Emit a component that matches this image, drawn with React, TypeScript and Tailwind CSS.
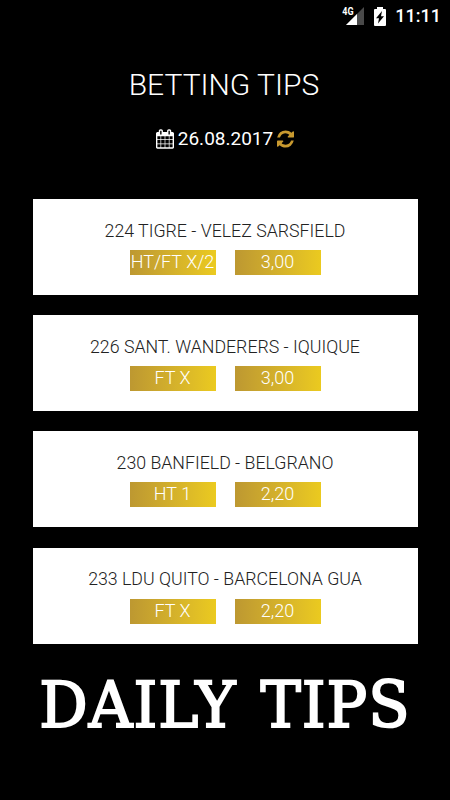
const tips = [
  { match: "224 TIGRE - VELEZ SARSFIELD", pick: "HT/FT X/2", odds: "3,00" },
  { match: "226 SANT. WANDERERS - IQUIQUE", pick: "FT X", odds: "3,00" },
  { match: "230 BANFIELD - BELGRANO", pick: "HT 1", odds: "2,20" },
  { match: "233 LDU QUITO - BARCELONA GUA", pick: "FT X", odds: "2,20" },
];

function CalendarIcon() {
  return (
    <svg viewBox="64 0 1664 1792" className="h-[20px] w-[18px]" fill="currentColor">
      <path d="M192 1664h288v-288h-288v288zm352 0h320v-288h-320v288zm-352-352h288v-320h-288v320zm352 0h320v-320h-320v320zm-352-384h288v-288h-288v288zm736 736h320v-288h-320v288zm-384-736h320v-288h-320v288zm768 736h288v-288h-288v288zm-384-352h320v-320h-320v320zm-352-864v-288q0-13-9.500-22.500t-22.500-9.500h-64q-13 0-22.500 9.500t-9.500 22.500v288q0 13 9.500 22.500t22.500 9.500h64q13 0 22.500-9.500t9.500-22.500zm736 864h288v-320h-288v320zm-384-384h320v-288h-320v288zm384 0h288v-288h-288v288zm32-480v-288q0-13-9.500-22.500t-22.500-9.500h-64q-13 0-22.500 9.500t-9.500 22.500v288q0 13 9.500 22.500t22.500 9.500h64q13 0 22.500-9.500t9.500-22.500zm384-64v1280q0 52-38 90t-90 38h-1408q-52 0-90-38t-38-90v-1280q0-52 38-90t90-38h128v-96q0-66 47-113t113-47h64q66 0 113 47t47 113v96h384v-96q0-66 47-113t113-47h64q66 0 113 47t47 113v96h128q52 0 90 38t38 90z" />
    </svg>
  );
}

function RefreshIcon() {
  return (
    <svg viewBox="128 0 1536 1792" className="h-[20px] w-[17px] text-[#c8992f]" fill="currentColor">
      <path d="M1639 1056q0 5-1 7-64 268-268 434.500t-478 166.500q-146 0-282.500-55t-243.500-157l-129 129q-19 19-45 19t-45-19-19-45v-448q0-26 19-45t45-19h448q26 0 45 19t19 45-19 45l-137 137q71 66 161 102t187 36q134 0 250-65t186-179q11-17 53-117 8-23 30-23h192q13 0 22.500 9.500t9.500 22.500zm25-800v448q0 26-19 45t-45 19h-448q-26 0-45-19t-19-45 19-45l138-138q-148-137-349-137-134 0-250 65t-186 179q-11 17-53 117-8 23-30 23h-199q-13 0-22.500-9.500t-9.500-22.500v-7q65-268 270-434.500t480-166.500q146 0 284 55.500t245 156.500l130-129q19-19 45-19t45 19 19 45z" />
    </svg>
  );
}

function StatusBar() {
  return (
    <div className="flex h-8 items-center justify-end pr-[9px]">
      <span className="mb-2 -mr-[7px] origin-right scale-x-90 text-[10px] leading-none font-bold">4G</span>
      <svg viewBox="0 0 18 18" className="h-[18px] w-[18px]">
        <path d="M18 0V18H0Z" fill="#4a4a4a" />
        <path d="M11 7V18H0Z" fill="#fff" />
      </svg>
      <svg viewBox="0 0 12 19" className="ml-2.5 h-[19px] w-3">
        <path d="M3 0h6v2h2a1 1 0 0 1 1 1v15a1 1 0 0 1-1 1H1a1 1 0 0 1-1-1V3a1 1 0 0 1 1-1h2Z" fill="#fff" />
        <path d="M8 4 2 11.200H5L4 16.500 10 9.300H7Z" fill="#000" />
      </svg>
      <span className="ml-[9px] text-[18px] leading-none font-medium">11:11</span>
    </div>
  );
}

function TipBadge({ label }: { label: string }) {
  return (
    <div className="h-[25px] w-[86px] bg-linear-to-r from-[#bd9831] to-[#ebca1f] text-center text-[18px] leading-[24px] font-light whitespace-nowrap text-white">
      {label}
    </div>
  );
}

function App() {
  return (
    <div className="h-[800px] w-[450px] overflow-hidden bg-black font-['Roboto',sans-serif] text-white">
      <StatusBar />

      <header className="flex flex-col items-center pt-[35px]">
        <h1 className="pr-0.5 text-[30px] leading-[36px] font-light">BETTING TIPS</h1>
        <div className="mt-[24px] flex h-6 items-center gap-1">
          <CalendarIcon />
          <span className="text-[19px] leading-6">26.08.2017</span>
          <RefreshIcon />
        </div>
      </header>

      <main className="mt-[48px] flex flex-col items-center gap-[20.2px]">
        {tips.map((tip) => (
          <section key={tip.match} className="flex h-24 w-[385px] flex-col items-center bg-white pt-[20.8px]">
            <h2 className="text-[17.750px] leading-[22px] font-light whitespace-nowrap text-[#222]">
              {tip.match}
            </h2>
            <div className="mt-[8.2px] flex gap-[19px]">
              <TipBadge label={tip.pick} />
              <TipBadge label={tip.odds} />
            </div>
          </section>
        ))}
      </main>

      <footer className="mt-[26.4px] text-center">
        <p className="origin-center scale-x-[0.96] font-['DejaVu_Serif',serif] text-[63px] leading-[72px] tracking-[1px] [word-spacing:4px] whitespace-nowrap [-webkit-text-stroke:2px_white]">
          DAILY TIPS
        </p>
      </footer>
    </div>
  );
}

export default App;
